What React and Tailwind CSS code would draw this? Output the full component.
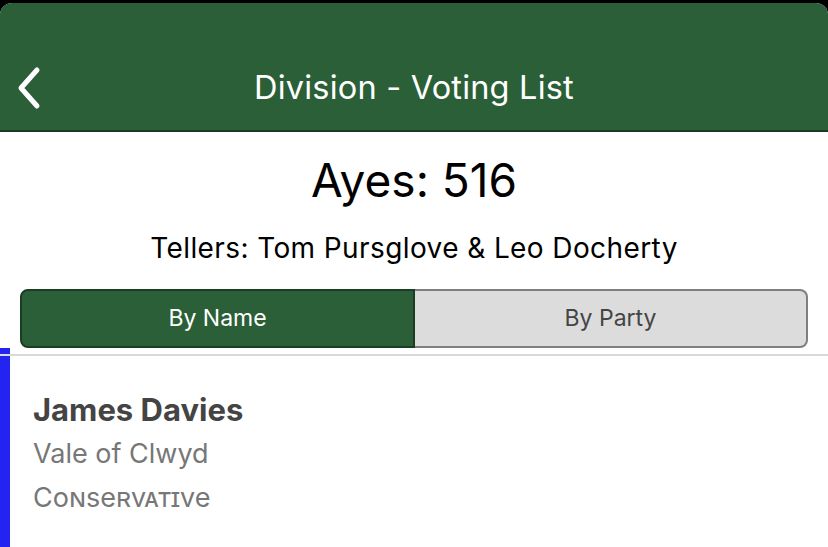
export default function App() {
  return (
    <div className="w-[828px] h-[547px] overflow-hidden bg-black" style={{ fontFamily: "Inter, 'Noto Sans', sans-serif" }}>
      <div className="mt-[3px] h-[544px] flex flex-col bg-white rounded-t-[12px] overflow-hidden">
        <div className="h-[129px] bg-[#2a5f38] border-b-2 border-[#1b3a22] flex items-end relative">
          <div className="h-[86px] w-full flex items-center justify-center relative">
            <button className="absolute left-[10px] top-[18px] p-1">
              <svg width="30" height="44" viewBox="0 0 30 44" fill="none">
                <path d="M23 4 L7 22 L23 40" stroke="white" strokeWidth="5" strokeLinecap="round" strokeLinejoin="round" />
              </svg>
            </button>
            <span className="text-white text-[32.5px] tracking-[0.2px] mt-[2px]">Division - Voting List</span>
          </div>
        </div>

        <div className="flex flex-col items-center">
          <div className="mt-[20px] text-[46px] leading-[56px] text-black">Ayes: 516</div>
          <div className="mt-[22px] text-[28px] leading-[36px] tracking-[0.4px] text-black">Tellers: Tom Pursglove &amp; Leo Docherty</div>
        </div>

        <div className="mt-[23px] mx-[20px] flex h-[59px] text-[23px]">
          <div className="flex-1 flex items-center justify-center bg-[#2a5f38] border-2 border-[#1a3d23] rounded-l-[8px] text-white">By Name</div>
          <div className="flex-1 flex items-center justify-center bg-[#dcdcdc] border-2 border-l-0 border-[#7f7f7f] rounded-r-[8px] text-[#444]">By Party</div>
        </div>

        <div className="flex flex-1">
          <div className="w-[10px] bg-[#2323f2]"></div>
          <div className="flex-1 flex flex-col">
            <div className="mt-[6px] h-[2px] bg-[#d9d9d9] -ml-[10px]"></div>
            <div className="pl-[23px] pt-[35px]">
              <div className="text-[31px] leading-[38px] font-bold text-[#444]">James Davies</div>
              <div className="mt-[7px] text-[27px] leading-[36px] text-[#777]">Vale of Clwyd</div>
              <div className="mt-[8px] text-[27px] leading-[36px] text-[#777]" style={{ fontVariant: "small-caps" }}>Conservative</div>
            </div>
          </div>
        </div>
      </div>
    </div>
  );
}
